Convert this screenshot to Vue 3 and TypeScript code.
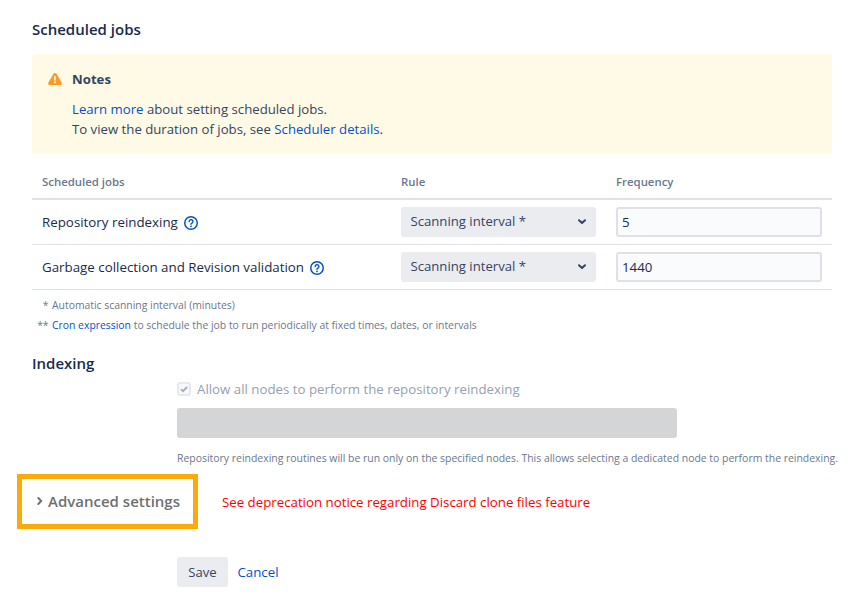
<script setup lang="ts">
import { ref } from 'vue'

interface Job {
  name: string
  rule: string
  frequency: string
}

const jobs = ref<Job[]>([
  { name: 'Repository reindexing', rule: 'Scanning interval *', frequency: '5' },
  { name: 'Garbage collection and Revision validation', rule: 'Scanning interval *', frequency: '1440' },
])
</script>

<template>
  <main class="page">
    <h2 class="heading">Scheduled jobs</h2>

    <section class="notes">
      <svg class="warn" viewBox="0 0 14 12" width="14" height="12">
        <path d="M5.3 1.1C6.1-.3 7.9-.3 8.7 1.1l5 8.6c.6 1.1-.1 2.3-1.3 2.3H1.6C.4 12-.3 10.8.3 9.7z" fill="#ff991f" />
        <path d="M7 4v2.7" stroke="#fffae6" stroke-width="1.9" stroke-linecap="round" />
        <circle cx="7" cy="9.3" r="1.05" fill="#fffae6" />
      </svg>
      <div class="notes-body">
        <h3 class="notes-title">Notes</h3>
        <p><a>Learn more</a> about setting scheduled jobs.</p>
        <p>To view the duration of jobs, see <a>Scheduler details</a>.</p>
      </div>
    </section>

    <div class="jobs">
      <div class="row head">
        <span>Scheduled jobs</span>
        <span>Rule</span>
        <span>Frequency</span>
      </div>
      <div v-for="job in jobs" :key="job.name" class="row">
        <div class="name">
          <span>{{ job.name }}</span>
          <svg class="help" viewBox="0 0 14 14" width="14" height="14">
            <circle cx="7" cy="7" r="6.25" fill="none" stroke="#0052cc" stroke-width="1.5" />
            <path d="M5.2 5.5a1.85 1.85 0 1 1 2.8 1.6c-.7.45-1 .7-1 1.2" fill="none" stroke="#0052cc" stroke-width="1.4" stroke-linecap="round" />
            <circle cx="7" cy="10.3" r=".9" fill="#0052cc" />
          </svg>
        </div>
        <div class="select">
          <span>{{ job.rule }}</span>
          <svg viewBox="0 0 8 6" width="8" height="6">
            <path d="M1 1.3l3 2.8 3-2.8" fill="none" stroke="#344563" stroke-width="2" stroke-linecap="round" stroke-linejoin="round" />
          </svg>
        </div>
        <input v-model="job.frequency" class="field" type="text" />
      </div>
    </div>

    <div class="legend">
      <span class="mark">*</span><span>Automatic scanning interval (minutes)</span>
      <span class="mark">**</span><span><a>Cron expression</a> to schedule the job to run periodically at fixed times, dates, or intervals</span>
    </div>

    <h2 class="heading indexing">Indexing</h2>

    <section class="form">
      <div class="check">
        <svg viewBox="0 0 14 14" width="14" height="14">
          <rect x="1" y="1" width="12" height="12" rx="2" fill="#f7f8fa" stroke="#e6e8ec" stroke-width="2" />
          <path d="M4 7.2l2 2 4.2-4.4" fill="none" stroke="#a5adba" stroke-width="1.9" />
        </svg>
        <span>Allow all nodes to perform the repository reindexing</span>
      </div>
      <div class="node-field"></div>
      <p class="hint">Repository reindexing routines will be run only on the specified nodes. This allows selecting a dedicated node to perform the reindexing.</p>
    </section>

    <div class="advanced">
      <div class="toggle">
        <svg viewBox="0 0 6 8" width="6" height="8">
          <path d="M1.3 1l2.9 3-2.9 3" fill="none" stroke="#707070" stroke-width="1.9" stroke-linecap="round" stroke-linejoin="round" />
        </svg>
        <span>Advanced settings</span>
      </div>
      <span class="deprecation">See deprecation notice regarding Discard clone files feature</span>
    </div>

    <div class="actions">
      <button class="save" type="button">Save</button>
      <a>Cancel</a>
    </div>
  </main>
</template>

<style>
body {
  background: #fff;
}
</style>

<style scoped>
.page {
  box-sizing: border-box;
  width: 865px;
  height: 600px;
  padding: 19px 0 0 32px;
  overflow: hidden;
  font-family: "Open Sans", "Noto Sans", sans-serif;
  font-size: 13.27px;
  line-height: 20px;
  color: #172b4d;
}

.page h2,
.page h3,
.page p {
  margin: 0;
}

a {
  color: #0052cc;
}

.page .heading {
  font-size: 15px;
  font-weight: 600;
  line-height: 20px;
}

.notes {
  display: flex;
  gap: 10px;
  box-sizing: border-box;
  width: 800px;
  height: 100px;
  margin-top: 15px;
  padding: 15px 16px;
  border-radius: 3px;
  background: #fffae6;
  color: #344563;
}

.notes-body {
  font-size: 13.2px;
}

.warn {
  flex: none;
  margin-top: 4px;
}

.page .notes-title {
  margin-bottom: 10px;
  font-size: 13.2px;
  font-weight: 700;
  line-height: 20px;
}

.jobs {
  width: 800px;
}

.row {
  display: grid;
  grid-template-columns: 339px 195px 206px;
  column-gap: 20px;
  align-items: center;
  box-sizing: border-box;
  height: 45px;
  padding: 0 10px;
  border-bottom: 1px solid #dfe1e6;
}

.head {
  height: 46px;
  padding-top: 12px;
  border-bottom: 2px solid #dfe1e6;
  font-size: 11.4px;
  font-weight: 600;
  color: #6b778c;
}

.name {
  display: flex;
  align-items: center;
  gap: 6px;
  font-size: 13.33px;
}

.name:first-child {
  white-space: nowrap;
}

.help {
  margin-top: 1px;
}

.select {
  display: flex;
  align-items: center;
  justify-content: space-between;
  box-sizing: border-box;
  height: 30px;
  padding: 0 10px 2px 9.5px;
  border-radius: 3px;
  background: #ebecf0;
  font-size: 13.15px;
  color: #344563;
}

.select svg {
  margin-top: 2px;
}

.field {
  box-sizing: border-box;
  width: 206px;
  height: 30px;
  padding: 0 4px;
  border: 2px solid #dfe1e6;
  border-radius: 3px;
  background: #fafbfc;
  font: inherit;
  color: #172b4d;
}

.legend {
  display: grid;
  grid-template-columns: 16px auto;
  column-gap: 4px;
  margin-top: 5px;
  font-size: 10.4px;
  color: #6b778c;
}

.mark {
  text-align: right;
  letter-spacing: -0.4px;
}

.page .indexing {
  margin-top: 18px;
}

.form {
  padding-left: 145px;
}

.check {
  display: flex;
  align-items: center;
  gap: 6px;
  margin-top: 6px;
  color: #97a0af;
}

.node-field {
  width: 500px;
  height: 30px;
  margin-top: 9px;
  border-radius: 3px;
  background: #d4d5d7;
}

.page .hint {
  margin-top: 10px;
  font-size: 10.45px;
  white-space: nowrap;
  color: #6b778c;
}

.advanced {
  display: flex;
  align-items: center;
  gap: 24px;
  margin: 6px 0 0 -15px;
}

.toggle {
  display: flex;
  align-items: center;
  gap: 5px;
  box-sizing: border-box;
  width: 181px;
  height: 55px;
  padding: 0 0 2px 15px;
  border: 5px solid #f9ab0a;
  font-size: 15px;
  font-weight: 600;
  white-space: nowrap;
  color: #707070;
}

.deprecation {
  color: #f00;
}

.actions {
  display: flex;
  align-items: center;
  gap: 9.5px;
  margin-top: 28px;
  padding-left: 145px;
}

.save {
  width: 51px;
  height: 30px;
  padding: 0;
  border: 0;
  border-radius: 3px;
  background: #ebecf0;
  font: inherit;
  font-size: 13.1px;
  color: #344563;
}
</style>
